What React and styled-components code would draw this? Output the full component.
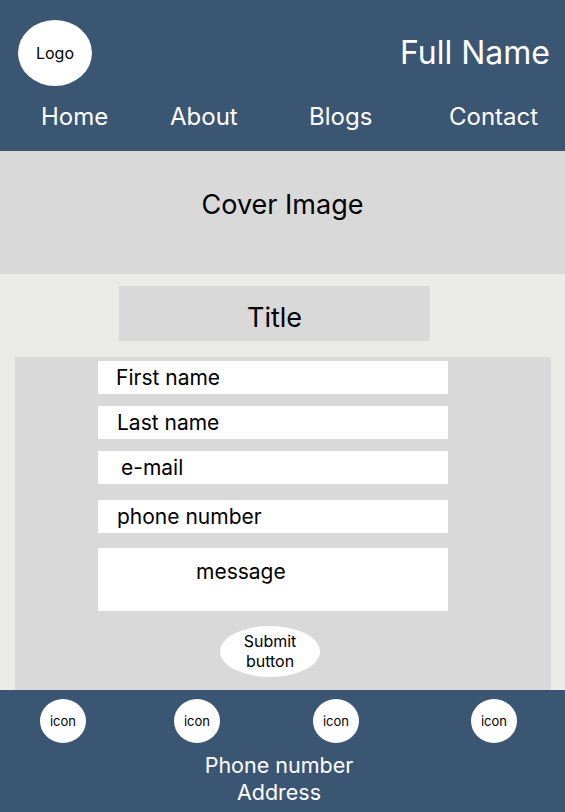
import React from "react";
import styled, { createGlobalStyle } from "styled-components";

const GlobalStyle = createGlobalStyle`
  body {
    margin: 0;
    font-family: Inter, "Noto Sans", sans-serif;
    color: #000;
  }
`;

const BLUE = "#3B5673";
const GREY = "#D9D9D9";

const Page = styled.div`
  width: 565px;
  height: 812px;
  overflow: hidden;
  display: flex;
  flex-direction: column;
  background: #ebebe9;
`;

//header
const Header = styled.header`
  background: ${BLUE};
  height: 151px;
  box-sizing: border-box;
  padding: 20px 15px 0 18px;
  flex-shrink: 0;
`;

const TopRow = styled.div`
  display: flex;
  justify-content: space-between;
  align-items: center;
  height: 66px;
`;

const Logo = styled.div`
  width: 74px;
  height: 66px;
  border-radius: 50%;
  background: #fff;
  display: flex;
  align-items: center;
  justify-content: center;
  font-size: 16px;
`;

const FullName = styled.h1`
  margin: 0;
  color: #fff;
  font-size: 32px;
  font-weight: 400;
  line-height: 40px;
`;

const Nav = styled.nav`
  display: grid;
  grid-template-columns: 129px 139px 140px auto;
  align-items: center;
  height: 30px;
  margin-top: 16px;
  padding-left: 23px;
`;

const NavLink = styled.a`
  color: #fff;
  font-size: 24px;
  text-decoration: none;
  line-height: 30px;
`;

//cover
const Cover = styled.section`
  height: 123px;
  flex-shrink: 0;
  background: ${GREY};
  box-sizing: border-box;
  padding-top: 37px;
  text-align: center;
  font-size: 27px;
  line-height: 33px;
`;

//main
const Main = styled.main`
  flex: 1;
  padding: 12px 14px 0 15px;
`;

const TitleBox = styled.h2`
  margin: 0 0 0 104px;
  width: 311px;
  height: 55px;
  box-sizing: border-box;
  padding-top: 15px;
  background: ${GREY};
  text-align: center;
  font-size: 27px;
  font-weight: 400;
  line-height: 33px;
`;

const FormPanel = styled.form`
  margin-top: 16px;
  width: 536px;
  box-sizing: border-box;
  background: ${GREY};
  padding: 4px 0 13px 83px;
  display: flex;
  flex-direction: column;
`;

const Field = styled.div`
  width: 350px;
  height: ${(p) => p.$h || 33}px;
  margin-top: ${(p) => p.$mt || 0}px;
  box-sizing: border-box;
  background: #fff;
  padding-left: ${(p) => p.$indent}px;
  padding-top: ${(p) => (p.$top ? p.$top : 0)}px;
  display: flex;
  align-items: ${(p) => (p.$top ? "flex-start" : "center")};
  font-size: 21px;
  line-height: 25px;
`;

const SubmitButton = styled.button`
  margin: 15px 0 0 122px;
  width: 100px;
  height: 51px;
  border: none;
  border-radius: 50%;
  background: #fff;
  font-family: inherit;
  font-size: 16px;
  line-height: 19.5px;
  color: #000;
  padding: 0;
`;

//footer
const Footer = styled.footer`
  background: ${BLUE};
  height: 122px;
  flex-shrink: 0;
  box-sizing: border-box;
  padding-top: 9px;
`;

const IconRow = styled.div`
  display: grid;
  grid-template-columns: 134px 139px 158px 46px;
  padding-left: 40px;
`;

const IconCircle = styled.div`
  width: 46px;
  height: 44px;
  border-radius: 50%;
  background: #fff;
  display: flex;
  align-items: center;
  justify-content: center;
  font-size: 13px;
`;

const ContactInfo = styled.div`
  margin-top: 9px;
  padding-right: 7px;
  text-align: center;
  color: #fff;
  font-size: 21.5px;
  line-height: 26.5px;
`;

const fields = [
  { label: "First name", indent: 18, mt: 0 },
  { label: "Last name", indent: 19, mt: 12 },
  { label: "e-mail", indent: 23, mt: 12 },
  { label: "phone number", indent: 19, mt: 16 },
];

export default function App() {
  return (
    <>
      <GlobalStyle />
      <Page>
        <Header>
          <TopRow>
            <Logo>Logo</Logo>
            <FullName>Full Name</FullName>
          </TopRow>
          <Nav>
            <NavLink>Home</NavLink>
            <NavLink>About</NavLink>
            <NavLink>Blogs</NavLink>
            <NavLink>Contact</NavLink>
          </Nav>
        </Header>

        <Cover>Cover Image</Cover>

        <Main>
          <TitleBox>Title</TitleBox>
          <FormPanel onSubmit={(e) => e.preventDefault()}>
            {fields.map((f) => (
              <Field key={f.label} $indent={f.indent} $mt={f.mt}>
                {f.label}
              </Field>
            ))}
            <Field $indent={98} $mt={15} $h={63} $top={11}>
              message
            </Field>
            <SubmitButton type="submit">
              Submit
              <br />
              button
            </SubmitButton>
          </FormPanel>
        </Main>

        <Footer>
          <IconRow>
            <IconCircle>icon</IconCircle>
            <IconCircle>icon</IconCircle>
            <IconCircle>icon</IconCircle>
            <IconCircle>icon</IconCircle>
          </IconRow>
          <ContactInfo>
            Phone number
            <br />
            Address
          </ContactInfo>
        </Footer>
      </Page>
    </>
  );
}
